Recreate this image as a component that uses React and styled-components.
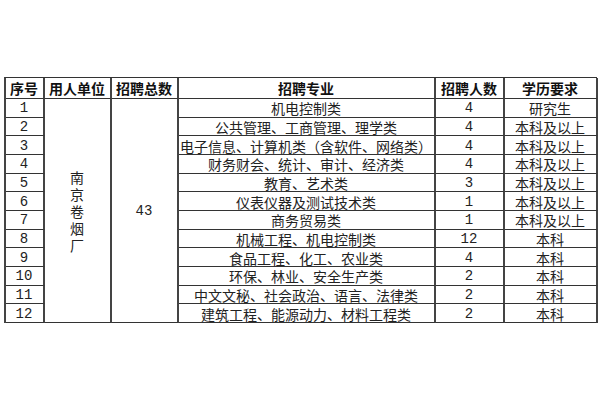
import React from "react";
import styled, { createGlobalStyle } from "styled-components";

const Global = createGlobalStyle`
  html, body { margin: 0; padding: 0; background: #fff; }
  body { font-family: "Liberation Mono", "Noto Sans CJK SC", sans-serif; }
`;

const Page = styled.div`
  width: 600px;
  height: 400px;
  display: flex;
  align-items: center;
  justify-content: center;
  background: #fff;
`;

const Grid = styled.div`
  display: grid;
  grid-template-columns: 39px 67px 67px 257px 69px 93px;
  grid-template-rows: 21px repeat(12, 1fr);
  height: 246px;
  width: 593px;
  box-sizing: border-box;
  border-top: 1.5px solid #333;
  border-left: 2px solid #444;
`;

const Cell = styled.div`
  box-sizing: border-box;
  border-right: 2px solid #444;
  border-bottom: 1.5px solid #333;
  display: flex;
  align-items: center;
  justify-content: center;
  padding-top: 1px;
  font-size: 14px;
  line-height: 16px;
  color: #222;
  white-space: nowrap;
  font-family: ${(p) =>
    p.$num ? `"Liberation Mono", "Noto Sans CJK SC", monospace` : `"Noto Sans CJK SC", sans-serif`};
  grid-row: ${(p) => (p.$span ? `span ${p.$span}` : "auto")};
`;

const Head = styled(Cell)`
  font-weight: 700;
  color: #111;
  font-size: 14px;
  padding-top: 0;
`;

const Vertical = styled.span`
  width: 14px;
  white-space: normal;
  line-height: 17px;
  text-align: center;
  word-break: break-all;
  margin-top: 2px;
`;

const rows = [
  ["1", "机电控制类", "4", "研究生"],
  ["2", "公共管理、工商管理、理学类", "4", "本科及以上"],
  ["3", "电子信息、计算机类（含软件、网络类）", "4", "本科及以上"],
  ["4", "财务财会、统计、审计、经济类", "4", "本科及以上"],
  ["5", "教育、艺术类", "3", "本科及以上"],
  ["6", "仪表仪器及测试技术类", "1", "本科及以上"],
  ["7", "商务贸易类", "1", "本科及以上"],
  ["8", "机械工程、机电控制类", "12", "本科"],
  ["9", "食品工程、化工、农业类", "4", "本科"],
  ["10", "环保、林业、安全生产类", "2", "本科"],
  ["11", "中文文秘、社会政治、语言、法律类", "2", "本科"],
  ["12", "建筑工程、能源动力、材料工程类", "2", "本科"],
];

export default function App() {
  return (
    <>
      <Global />
      <Page>
        <Grid>
          <Head>序号</Head>
          <Head>用人单位</Head>
          <Head>招聘总数</Head>
          <Head>招聘专业</Head>
          <Head>招聘人数</Head>
          <Head>学历要求</Head>
          {rows.map((r, i) => (
            <React.Fragment key={r[0]}>
              <Cell $num>{r[0]}</Cell>
              {i === 0 && (
                <>
                  <Cell $span={12}>
                    <Vertical>南京卷烟厂</Vertical>
                  </Cell>
                  <Cell $span={12} $num>43</Cell>
                </>
              )}
              <Cell>{r[1]}</Cell>
              <Cell $num>{r[2]}</Cell>
              <Cell>{r[3]}</Cell>
            </React.Fragment>
          ))}
        </Grid>
      </Page>
    </>
  );
}
